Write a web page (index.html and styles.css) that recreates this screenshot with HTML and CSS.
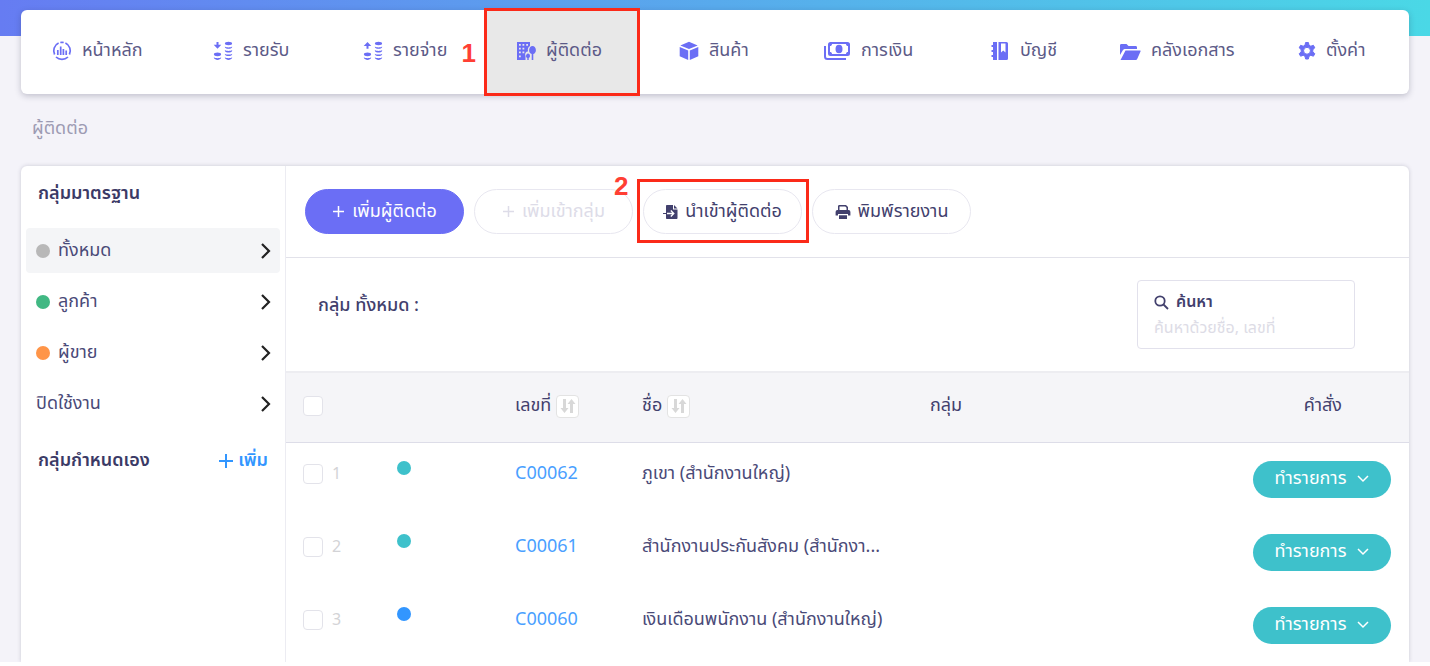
FILE: index.html
```html
<!DOCTYPE html>
<html lang="th">
<head>
<meta charset="utf-8">
<meta name="viewport" content="width=device-width, initial-scale=1">
<title>ผู้ติดต่อ</title>
<link rel="stylesheet" href="styles.css">
</head>
<body>
<div class="app">
  <header class="top">
    <nav class="nav" aria-label="เมนูหลัก">
      <a class="nav-item nav-home" href="#"><svg class="icon" width="20" height="20" viewBox="0 0 20 20" fill="none" stroke="currentColor" stroke-width="1.7"><path d="M2.600 13.500a8.500 8.500 0 0 1 4-11.500M13.400 2a8.500 8.500 0 0 1 4 11.500M4 16a8.700 8.700 0 0 0 12 0M8.300 1.500a8.700 8.700 0 0 1 3.400 0"/><path d="M5.800 9v5M8.700 5.500V14M11.400 8v6M14.200 9.500V14"/></svg>หน้าหลัก</a>
      <a class="nav-item nav-income" href="#"><svg class="icon" width="20" height="20" viewBox="0 0 20 20" fill="currentColor"><path d="M3.500 1h2v2.800h2.800L4.500 7.800.7 3.800h2.800z"/><ellipse cx="4.500" cy="13.300" rx="3.600" ry="1.900"/><path d="M.9 16.300c1.500 1.200 5.700 1.200 7.200 0v.8c-1 2.400-6.200 2.400-7.200 0z"/><ellipse cx="15.500" cy="2.500" rx="3.600" ry="1.700"/><path d="M11.900 5.500c1.500 1.200 5.700 1.200 7.200 0v.8c-1 2-6.200 2-7.200 0zM11.900 9.100c1.500 1.200 5.700 1.200 7.200 0v.8c-1 2-6.200 2-7.200 0zM11.900 12.700c1.500 1.200 5.700 1.200 7.200 0v.8c-1 2-6.200 2-7.200 0zM11.900 16.300c1.500 1.200 5.700 1.200 7.200 0v.8c-1 2.400-6.200 2.400-7.200 0z"/></svg>รายรับ</a>
      <a class="nav-item nav-expense" href="#"><svg class="icon" width="20" height="20" viewBox="0 0 20 20" fill="currentColor"><path d="M3.500 7.800h2V5h2.800L4.500 1 .7 5h2.800z"/><ellipse cx="4.500" cy="13.300" rx="3.600" ry="1.900"/><path d="M.9 16.300c1.500 1.200 5.700 1.200 7.200 0v.8c-1 2.400-6.200 2.400-7.200 0z"/><ellipse cx="15.500" cy="2.500" rx="3.600" ry="1.700"/><path d="M11.900 5.500c1.500 1.200 5.700 1.200 7.200 0v.8c-1 2-6.200 2-7.200 0zM11.900 9.100c1.500 1.200 5.700 1.200 7.200 0v.8c-1 2-6.200 2-7.200 0zM11.900 12.700c1.500 1.200 5.700 1.200 7.200 0v.8c-1 2-6.200 2-7.200 0zM11.900 16.300c1.500 1.200 5.700 1.200 7.200 0v.8c-1 2.400-6.200 2.400-7.200 0z"/></svg>รายจ่าย<span class="step step-one">1</span></a>
      <a class="nav-item nav-contact" href="#" aria-current="page"><svg class="icon" width="20" height="20" viewBox="0 0 20 20"><path fill="currentColor" fill-rule="evenodd" d="M1 1h13v4c-2 1-2.500 3-2 5.500-2 0-3.500 2-2.500 4.500v4H1zM3 3v1.800h1.800V3zM6.500 3v1.800h1.800V3zM10.200 3v1.800H12V3zM3 6.700v1.800h1.800V6.700zM6.500 6.700v1.800h1.800V6.700zM3 10.500v1.800h1.800v-1.800zM6.500 10.500v1.800h1.800v-1.800zM3 14.500v1.800h1.800v-1.800z"/><path fill="currentColor" d="M16.500 5c2 0 3.400 2 3.400 4.200s-1.400 3.500-2.600 3.800v6h-1.600v-6c-1.500-.3-2.600-1.800-2.600-3.800S14.500 5 16.500 5zM12 12.500c1.300 0 2 1.300 2 2.500s-.6 1.700-1.300 2v2h-1.400v-2c-.8-.3-1.300-1-1.300-2s.7-2.500 2-2.500z"/></svg>ผู้ติดต่อ</a>
      <a class="nav-item nav-product" href="#"><svg class="icon" width="20" height="20" viewBox="0 0 20 20" fill="currentColor"><path d="m10 .8 8.700 3.600L10 8 1.300 4.400zM.7 6l8.500 3.500v9.600L.7 15.300zM19.300 6l-8.500 3.500v9.600l8.500-3.800z"/></svg>สินค้า</a>
      <a class="nav-item nav-finance" href="#"><svg class="icon" width="28" height="20" viewBox="0 0 28 20"><path fill="none" stroke="currentColor" stroke-width="2" d="M2 5v10.500c0 1.500 1 2.500 2.500 2.500H23"/><path fill="currentColor" fill-rule="evenodd" d="M7.500 1h17a2.500 2.500 0 0 1 2.500 2.500v9a2.500 2.500 0 0 1-2.500 2.500h-17A2.500 2.500 0 0 1 5 12.500v-9A2.500 2.500 0 0 1 7.500 1zM9 3C9 4.500 8 5 7 5v6c1 0 2 .5 2 2h14c0-1.500 1-2 2-2V5c-1 0-2-.5-2-2z"/><ellipse cx="16" cy="8" rx="3.500" ry="4.300" fill="currentColor"/></svg>การเงิน</a>
      <a class="nav-item nav-ledger" href="#"><svg class="icon" width="20" height="20" viewBox="0 0 20 20"><path fill="currentColor" fill-rule="evenodd" d="M8.500 1h8A1.500 1.500 0 0 1 18 2.500v15a1.500 1.500 0 0 1-1.500 1.500h-8zM11 2.500v9l2.200-2 2.300 2v-9z"/><path fill="currentColor" d="M3 1h4v18H3v-3H1.500v-2H3v-3H1.500V9H3V6H1.500V4H3z"/></svg>บัญชี</a>
      <a class="nav-item nav-docs" href="#"><svg class="icon" width="22" height="20" viewBox="0 0 22 20" fill="currentColor"><path d="M1 14V4.500C1 3.500 1.500 3 2.500 3h5l2 2h7C17.500 5 18 5.500 18 6.500V8H6.500C5 8 4.300 8.500 3.700 9.500z"/><path d="M6.500 9.500H21c.5 0 .8.500.5 1l-3.200 7.300c-.3.800-.8 1.200-1.600 1.200H1.500z"/></svg>คลังเอกสาร</a>
      <a class="nav-item nav-settings" href="#"><svg class="icon" width="18" height="20" viewBox="1 0 18 20"><path fill="currentColor" stroke="currentColor" stroke-linejoin="round" fill-rule="evenodd" d="M8.600 1.500h2.800l.6 2.700 1.800 1 2.600-.9 1.400 2.500-2 1.900v2.100l2 1.900-1.400 2.500-2.600-.9-1.800 1-.6 2.700H8.600L8 15.300l-1.800-1-2.600.9-1.400-2.500 2-1.900V8.700l-2-1.900 1.400-2.500 2.600.9 1.800-1zM10 6.300a3.400 3.400 0 1 0 0 6.900 3.400 3.400 0 0 0 0-6.900z"/></svg>ตั้งค่า</a>
    </nav>
  </header>
  <h1 class="page-title">ผู้ติดต่อ</h1>
  <div class="panel">
    <aside class="side">
      <h2 class="side-title">กลุ่มมาตรฐาน</h2>
      <a class="group group-active" href="#"><span class="dot dot-gray"></span>ทั้งหมด<svg class="chev" width="12" height="18" viewBox="0 0 12 18"><path d="m2 2 7 7-7 7"/></svg></a>
      <a class="group" href="#"><span class="dot dot-green"></span>ลูกค้า<svg class="chev" width="12" height="18" viewBox="0 0 12 18"><path d="m2 2 7 7-7 7"/></svg></a>
      <a class="group" href="#"><span class="dot dot-orange"></span>ผู้ขาย<svg class="chev" width="12" height="18" viewBox="0 0 12 18"><path d="m2 2 7 7-7 7"/></svg></a>
      <a class="group" href="#">ปิดใช้งาน<svg class="chev" width="12" height="18" viewBox="0 0 12 18"><path d="m2 2 7 7-7 7"/></svg></a>
      <div class="custom">
        <h2 class="custom-title">กลุ่มกำหนดเอง</h2>
        <button class="add-group" type="button"><svg width="16" height="16" viewBox="0 0 16 16" stroke="currentColor" stroke-width="2"><path d="M8 1v14M1 8h14"/></svg>เพิ่ม</button>
      </div>
    </aside>
    <main class="main">
      <div class="toolbar">
        <button class="pill pill-primary" type="button"><svg width="13" height="13" viewBox="0 0 13 13" stroke="currentColor" stroke-width="1.500"><path d="M6.500 1v11M1 6.500h11"/></svg>เพิ่มผู้ติดต่อ</button>
        <button class="pill" type="button" disabled><svg width="13" height="13" viewBox="0 0 13 13" stroke="currentColor" stroke-width="1.500"><path d="M6.500 1v11M1 6.500h11"/></svg>เพิ่มเข้ากลุ่ม</button>
        <div class="marked">
          <button class="pill" type="button"><svg width="15" height="16" viewBox="0 0 15 16"><path fill="currentColor" d="M3 2c0-.7.500-1 1-1h6v4.500h4.500V14c0 .7-.5 1-1 1H4c-.6 0-1-.3-1-1zM11 1l3.500 3.500H11z"/><path stroke="currentColor" d="M0 9.500h4"/><path stroke="#fff" fill="none" stroke-width="1.300" d="M4 9.500h6.500M7.800 6.500l3 3-3 3"/></svg>นำเข้าผู้ติดต่อ</button>
          <span class="step step-two">2</span>
        </div>
        <button class="pill" type="button"><svg width="16" height="16" viewBox="0 0 16 16" fill="currentColor"><path d="M3 2.500C3 1.700 3.500 1 4.300 1H11l2 2v3.500h-1.500V3.700L10.300 2.500H4.500v4H3zM2.500 6h11A1.900 1.900 0 0 1 15.400 8v3.500H13V10H3v1.500H.6V8a1.900 1.900 0 0 1 1.900-2zM4 11.200h8V15H4z"/></svg>พิมพ์รายงาน</button>
      </div>
      <div class="filter">
        <h2 class="filter-title">กลุ่ม ทั้งหมด :</h2>
        <div class="search">
          <label class="search-label" for="q"><svg width="15" height="15" viewBox="0 0 15 15" fill="none" stroke="currentColor" stroke-width="1.800"><circle cx="6" cy="6" r="4.700"/><path d="m9.500 9.500 4.500 4.500"/></svg>ค้นหา</label>
          <input class="search-input" id="q" type="text" placeholder="ค้นหาด้วยชื่อ, เลขที่">
        </div>
      </div>
      <table class="table">
        <colgroup><col class="col-check"><col class="col-dot"><col class="col-code"><col class="col-name"><col class="col-group"><col class="col-action"></colgroup>
        <thead>
          <tr>
            <th><input class="check" type="checkbox" aria-label="เลือกทั้งหมด"></th>
            <th></th>
            <th>เลขที่<button class="sort" type="button" aria-label="เรียงเลขที่"><svg width="18" height="16" viewBox="0 0 18 16" fill="currentColor"><path d="M4 1h3v9h2.500L5.500 15l-4-5H4zM11 15h3V6h2.500l-4-5-4 5H11z"/></svg></button></th>
            <th>ชื่อ<button class="sort" type="button" aria-label="เรียงชื่อ"><svg width="18" height="16" viewBox="0 0 18 16" fill="currentColor"><path d="M4 1h3v9h2.500L5.500 15l-4-5H4zM11 15h3V6h2.500l-4-5-4 5H11z"/></svg></button></th>
            <th>กลุ่ม</th>
            <th class="head-action">คำสั่ง</th>
          </tr>
        </thead>
        <tbody>
          <tr>
            <td><label class="pick"><input class="check" type="checkbox">1</label></td>
            <td><span class="mark mark-teal"></span></td>
            <td><a class="code" href="#">C00062</a></td>
            <td>ภูเขา (สำนักงานใหญ่)</td>
            <td></td>
            <td class="cell-action"><button class="action" type="button">ทำรายการ<svg width="12" height="8" viewBox="0 0 12 8"><path d="m1 1 5 5 5-5"/></svg></button></td>
          </tr>
          <tr>
            <td><label class="pick"><input class="check" type="checkbox">2</label></td>
            <td><span class="mark mark-teal"></span></td>
            <td><a class="code" href="#">C00061</a></td>
            <td>สำนักงานประกันสังคม (สำนักงา...</td>
            <td></td>
            <td class="cell-action"><button class="action" type="button">ทำรายการ<svg width="12" height="8" viewBox="0 0 12 8"><path d="m1 1 5 5 5-5"/></svg></button></td>
          </tr>
          <tr>
            <td><label class="pick"><input class="check" type="checkbox">3</label></td>
            <td><span class="mark mark-blue"></span></td>
            <td><a class="code" href="#">C00060</a></td>
            <td>เงินเดือนพนักงาน (สำนักงานใหญ่)</td>
            <td></td>
            <td class="cell-action"><button class="action" type="button">ทำรายการ<svg width="12" height="8" viewBox="0 0 12 8"><path d="m1 1 5 5 5-5"/></svg></button></td>
          </tr>
        </tbody>
      </table>
    </main>
  </div>
</div>
</body>
</html>
```

FILE: styles.css
```css
* {
  box-sizing: border-box;
}

body {
  margin: 0;
  background: #fff;
  color: #4a4a78;
  font-family: "Noto Sans Thai", "Noto Sans", sans-serif;
  font-size: 18px;
  line-height: 24px;
}

a {
  color: inherit;
  text-decoration: none;
}

button {
  font: inherit;
  color: inherit;
  cursor: pointer;
}

h1,
h2 {
  margin: 0;
  font-size: 18px;
}

svg {
  flex: none;
}

.app {
  min-height: calc(100vh - 4px);
  background: #f4f3f9 linear-gradient(90deg, #667cf2, #4ad8e6) 0 0 / 100% 36px no-repeat;
  display: flex;
  flex-direction: column;
  overflow: hidden;
}

.top {
  padding: 10px 21px 0;
}

.nav {
  display: grid;
  grid-template-columns: 153px 150px 160px 156px 148px 165px 131px 182px 1fr;
  height: 84px;
  background: #fff;
  border-radius: 6px;
  box-shadow: 0 2px 6px rgba(40, 40, 70, 0.25);
}

.nav-item {
  position: relative;
  display: flex;
  align-items: center;
  gap: 10px;
  padding-bottom: 3px;
  padding-left: 31px;
  white-space: nowrap;
  color: #5c5a87;
}

.nav-item .icon {
  color: #6b6ef5;
}

.nav-income,
.nav-expense {
  padding-left: 39px;
}

.nav-contact {
  margin: -2px 0;
  padding-left: 29px;
  border: 3px solid #fb2a19;
  background: #e8e8e8;
}

.nav-product {
  padding-left: 39px;
}

.nav-finance {
  padding-left: 35px;
}

.nav-ledger {
  padding-left: 37px;
}

.nav-docs {
  padding-left: 35px;
}

.nav-settings {
  padding-left: 32px;
}

.step {
  position: absolute;
  color: #ff3f34;
  font-family: "Liberation Sans", sans-serif;
  font-size: 26px;
  font-weight: 700;
  line-height: 26px;
}

.step-one {
  top: 30px;
  right: 8px;
}

.page-title {
  padding: 23px 32px 25px;
  color: #9d9bb3;
  font-weight: 400;
}

.panel {
  flex: 1;
  display: grid;
  grid-template-columns: 265px 1fr;
  margin: 0 21px;
  background: #fff;
  border-radius: 6px 6px 0 0;
  box-shadow: 0 0 4px rgba(40, 40, 70, 0.2);
}

.side {
  padding: 0 5px;
  border-right: 1px solid #ececf2;
}

.side-title {
  padding: 16px 12px 22px;
  color: #3b3a66;
  font-weight: 600;
}

.group {
  display: flex;
  align-items: center;
  gap: 8px;
  height: 45px;
  margin-bottom: 6px;
  padding: 0 8px 0 10px;
  border-radius: 4px;
}

.group-active {
  background: #f4f5f7;
}

.dot {
  width: 14px;
  height: 14px;
  border-radius: 50%;
}

.dot-gray {
  background: #b8b8b8;
}

.dot-green {
  background: #41b883;
}

.dot-orange {
  background: #ff9548;
}

.chev {
  margin-left: auto;
  fill: none;
  stroke: #222;
  stroke-width: 2.2;
}

.custom {
  display: flex;
  justify-content: space-between;
  align-items: center;
  padding: 17px 12px;
}

.custom-title {
  color: #3b3a66;
  font-weight: 600;
}

.add-group {
  display: flex;
  align-items: center;
  gap: 4px;
  padding: 0;
  border: 0;
  background: none;
  color: #3296ff;
  font-weight: 600;
}

.main {
  min-width: 0;
}

.toolbar {
  display: flex;
  gap: 10px;
  padding: 23px 19px;
  border-bottom: 1px solid #e2e2ea;
}

.pill {
  display: flex;
  align-items: center;
  justify-content: center;
  gap: 7px;
  width: 159px;
  height: 45px;
  padding: 0;
  border: 1px solid #e8e7f0;
  border-radius: 23px;
  background: #fff;
  color: #42406d;
  white-space: nowrap;
}

.pill:disabled {
  color: #dddce8;
}

.pill-primary {
  border-color: #6b6ef5;
  background: #6b6ef5;
  color: #fff;
}

.marked {
  position: relative;
}

.marked::after {
  content: "";
  position: absolute;
  inset: -10px -7px -9px -6px;
  border: 3px solid #fb2a19;
  pointer-events: none;
}

.step-two {
  top: -16px;
  left: -29px;
}

.filter {
  display: flex;
  justify-content: space-between;
  align-items: flex-start;
  padding: 22px 54px 22px 32px;
}

.filter-title {
  padding-top: 14px;
  color: #42406d;
  font-weight: 500;
}

.search {
  width: 218px;
  height: 69px;
  padding: 9px 16px;
  border: 1px solid #e2e1ec;
  border-radius: 4px;
}

.search-label {
  display: flex;
  align-items: center;
  gap: 7px;
  color: #42406d;
  font-size: 16px;
  font-weight: 600;
}

.search-input {
  display: block;
  width: 100%;
  height: 28px;
  padding: 0;
  border: 0;
  outline: 0;
  background: none;
  color: #42406d;
  font: inherit;
  font-size: 16px;
}

.search-input::placeholder {
  color: #dddce6;
}

.table {
  width: 100%;
  border-collapse: collapse;
  table-layout: fixed;
}

.col-check {
  width: 101px;
}

.col-dot {
  width: 128px;
}

.col-code {
  width: 127px;
}

.col-name {
  width: 288px;
}

.col-action {
  width: 172px;
}

.table th {
  height: 70px;
  padding: 0 0 2px;
  border-top: 2px solid #ededf1;
  border-bottom: 1px solid #dddde8;
  background: #f5f5f8;
  color: #42406d;
  font-weight: 400;
  text-align: left;
}

.table td {
  height: 73px;
  padding: 0;
  padding-bottom: 9px;
  white-space: nowrap;
}

.table th:first-child,
.table td:first-child {
  padding-left: 17px;
}

.check {
  appearance: none;
  display: block;
  width: 20px;
  height: 20px;
  margin: 0;
  border: 1px solid #e3e3ea;
  border-radius: 4px;
  background: #fff;
}

.pick {
  display: flex;
  align-items: center;
  gap: 9px;
  color: #d3d3d6;
  font-size: 16px;
}

.sort {
  display: inline-flex;
  align-items: center;
  justify-content: center;
  width: 23px;
  height: 23px;
  margin-left: 5px;
  padding: 0;
  border: 1px solid #e3e3e3;
  border-radius: 4px;
  background: #fff;
  color: #d8d8d8;
  vertical-align: middle;
}

.mark {
  display: block;
  width: 14px;
  height: 14px;
  margin: 0 0 13px 10px;
  border-radius: 50%;
}

.mark-teal {
  background: #3ec1cb;
}

.mark-blue {
  background: #3296ff;
}

.code {
  color: #4a9fff;
}

.table .head-action {
  padding-right: 67px;
  text-align: right;
}

.table .cell-action {
  padding-top: 1px;
  padding-right: 18px;
  padding-bottom: 0;
}

.action {
  display: flex;
  align-items: center;
  justify-content: center;
  gap: 11px;
  width: 138px;
  height: 37px;
  margin-left: auto;
  padding: 0;
  border: 0;
  border-radius: 19px;
  background: #3ec1cb;
  color: #fff;
}

.action svg {
  fill: none;
  stroke: currentColor;
  stroke-width: 1.5;
}
```
